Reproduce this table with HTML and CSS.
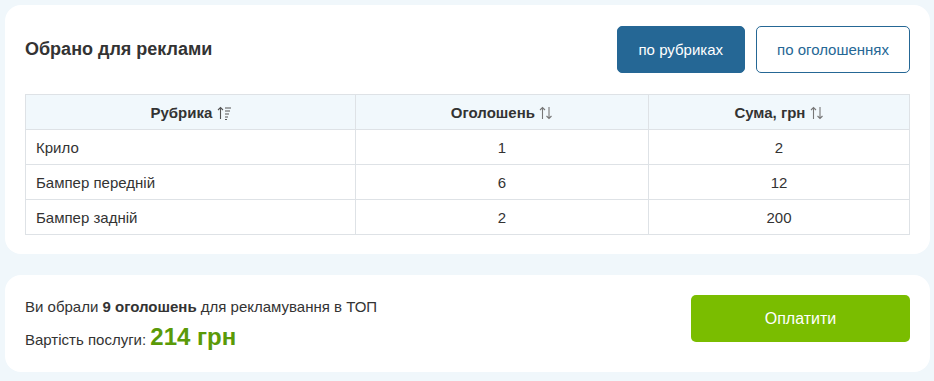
FILE: index.html
```html
<!DOCTYPE html>
<html lang="uk">
<head>
<meta charset="utf-8">
<title>Обрано для реклами</title>
<link rel="stylesheet" href="styles.css">
</head>
<body>
<main class="page">
  <section class="card selection">
    <div class="selection-head">
      <h2 class="title">Обрано для реклами</h2>
      <div class="tabs">
        <button class="tab tab-active">по рубриках</button>
        <button class="tab">по оголошеннях</button>
      </div>
    </div>
    <table class="grid">
      <colgroup>
        <col class="col-a"><col class="col-b"><col class="col-c">
      </colgroup>
      <thead>
        <tr>
          <th>Рубрика <svg class="sort" width="14" height="14" viewBox="0 0 14 14"><path d="M3.5 13V1.5M1 4L3.5 1.5L6 4" fill="none" stroke="#555" stroke-width="1.1"/><path d="M8 2h6M8 5h5M8 8h4M8 11h3M8 13.5h2" stroke="#555" stroke-width="1"/></svg></th>
          <th>Оголошень <svg class="sort" width="14" height="14" viewBox="0 0 14 14"><path d="M3.5 13V1.5M1 4L3.5 1.5L6 4" fill="none" stroke="#777" stroke-width="1.1"/><path d="M10 1v11.5M7.5 10L10 12.5L12.5 10" fill="none" stroke="#777" stroke-width="1.1"/></svg></th>
          <th>Сума, грн <svg class="sort" width="14" height="14" viewBox="0 0 14 14"><path d="M3.5 13V1.5M1 4L3.5 1.5L6 4" fill="none" stroke="#777" stroke-width="1.1"/><path d="M10 1v11.5M7.5 10L10 12.5L12.5 10" fill="none" stroke="#777" stroke-width="1.1"/></svg></th>
        </tr>
      </thead>
      <tbody>
        <tr><td>Крило</td><td class="num">1</td><td class="num">2</td></tr>
        <tr><td>Бампер передній</td><td class="num">6</td><td class="num">12</td></tr>
        <tr><td>Бампер задній</td><td class="num">2</td><td class="num">200</td></tr>
      </tbody>
    </table>
  </section>

  <section class="card summary">
    <div class="summary-text">
      <p class="line">Ви обрали <b>9 оголошень</b> для рекламування в ТОП</p>
      <p class="line price-line">Вартість послуги: <span class="price">214 грн</span></p>
    </div>
    <button class="pay">Оплатити</button>
  </section>
</main>
</body>
</html>
```

FILE: styles.css
```css
* { box-sizing: border-box; }

html, body {
  margin: 0;
  background: #f0f7fb;
}

body {
  font-family: "Liberation Sans", Arial, sans-serif;
  color: #333;
  font-size: 15px;
}

.page {
  padding: 5px 4px 5px 5px;
  display: flex;
  flex-direction: column;
  gap: 21px;
}

.card {
  background: #fff;
  border-radius: 16px;
}

.selection {
  padding: 21px 20px 19px 20px;
}

.selection-head {
  display: flex;
  align-items: center;
  justify-content: space-between;
  margin-bottom: 21px;
}

.title {
  margin: 0;
  font-size: 18px;
  font-weight: bold;
  color: #333;
}

.tabs {
  display: flex;
  gap: 11px;
}

.tab {
  height: 47px;
  padding: 0 20px;
  border: 1px solid #256795;
  border-radius: 5px;
  background: #fff;
  color: #256795;
  font-family: inherit;
  font-size: 15px;
  white-space: nowrap;
}

.tab-active {
  background: #256795;
  color: #fff;
  padding: 0 21px;
}

.grid {
  width: 100%;
  border-collapse: collapse;
  table-layout: fixed;
}

.col-a { width: 330px; }
.col-b { width: 293px; }

.grid th,
.grid td {
  border: 1px solid #dee2e6;
  height: 35px;
  padding: 0 10px;
}

.grid th {
  background: #f1f8fc;
  font-weight: bold;
  text-align: center;
}

.sort {
  vertical-align: -2px;
}

.grid td.num {
  text-align: center;
}

.summary {
  display: flex;
  justify-content: space-between;
  align-items: flex-start;
  padding: 20px 20px 20px 20px;
}

.summary-text {
  padding-top: 2px;
}

.line {
  margin: 0;
  line-height: 20px;
}

.price-line {
  margin-top: 11px;
  line-height: 24px;
  height: 24px;
}

.price {
  font-size: 24px;
  line-height: 18px;
  font-weight: bold;
  color: #5a9a08;
}

.pay {
  width: 219px;
  height: 47px;
  border: none;
  border-radius: 5px;
  background: #7abd00;
  color: #fff;
  font-family: inherit;
  font-size: 16px;
}
```
